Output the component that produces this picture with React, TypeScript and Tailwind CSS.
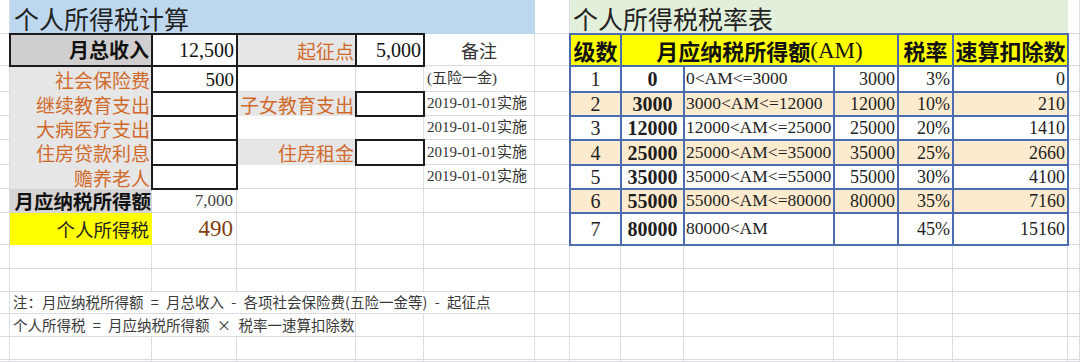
import React from 'react';

const GRID = 'border-r border-b border-[#d9dce5]';
const SERIF = "font-['Liberation_Serif','Noto_Sans_CJK_SC',serif]";
const SANS = "font-['Noto_Sans_CJK_SC','Noto_Sans',sans-serif]";
const BLK = 'relative outline-2 outline-[#1c1c1c] outline-offset-[-1px]';
const BLU = 'relative outline-2 outline-[#4c6cb0] outline-offset-[-1px]';

function E({ n = 1 }: { n?: number }) {
  return (
    <>
      {Array.from({ length: n }).map((_, i) => (
        <div key={i} className={GRID} />
      ))}
    </>
  );
}

type Rate = { n: string; a: string; r: string; u: string; p: string; q: string; alt: boolean };

const rates: Rate[] = [
  { n: '1', a: '0', r: '0<AM<=3000', u: '3000', p: '3%', q: '0', alt: false },
  { n: '2', a: '3000', r: '3000<AM<=12000', u: '12000', p: '10%', q: '210', alt: true },
  { n: '3', a: '12000', r: '12000<AM<=25000', u: '25000', p: '20%', q: '1410', alt: false },
  { n: '4', a: '25000', r: '25000<AM<=35000', u: '35000', p: '25%', q: '2660', alt: true },
  { n: '5', a: '35000', r: '35000<AM<=55000', u: '55000', p: '30%', q: '4100', alt: false },
  { n: '6', a: '55000', r: '55000<AM<=80000', u: '80000', p: '35%', q: '7160', alt: true },
  { n: '7', a: '80000', r: '80000<AM', u: '', p: '45%', q: '15160', alt: false },
];

function RateCells({ r }: { r: Rate }) {
  const bg = r.alt ? 'bg-[#fdebcf]' : 'bg-white';
  const base = `${BLU} ${bg} flex items-center ${SERIF} leading-none text-[#1e1e1e] overflow-visible whitespace-nowrap`;
  return (
    <>
      <div className={`${base} justify-center text-[20px] font-medium`}>{r.n}</div>
      <div className={`${base} justify-center text-[20px] font-bold`}>{r.a}</div>
      <div className={`${base} justify-start pl-[2px] text-[17.5px]`}>{r.r}</div>
      <div className={`${base} justify-end pr-[3px] text-[18px]`}>{r.u}</div>
      <div className={`${base} justify-end pr-[3px] text-[18px]`}>{r.p}</div>
      <div className={`${base} justify-end pr-[3px] text-[18px]`}>{r.q}</div>
    </>
  );
}

const orangeLabel = `flex items-center justify-end pr-[2px] ${SANS} text-[19px] leading-none text-[#d06a2b] whitespace-nowrap`;
const note2019 = `${GRID} flex items-center pl-[3px] ${SERIF} text-[15px] leading-none text-[#333] whitespace-nowrap`;
const noteText = `flex items-center pl-[3px] ${SANS} text-[14.5px] leading-none text-[#3a3a3a] whitespace-nowrap`;

export default function App() {
  return (
    <div className="w-[1080px] h-[362px] overflow-hidden bg-white">
      <div className="grid grid-cols-[10px_142px_85px_119px_68px_111px_35px_51px_63px_150px_64px_55px_115px_12px] grid-rows-[34px_32px_26px_24px_24px_25px_24px_24px_32px_24px_23px_22px_23px_23px_2px]">
        {/* Row 1: titles */}
        <E />
        <div className={`col-span-5 bg-[#bdd7ee] flex items-center pl-[4px] pt-[2px] ${SANS} text-[25px] leading-none text-[#222] whitespace-nowrap`}>
          个人所得税计算
        </div>
        <E />
        <div className={`col-span-6 bg-[#e2efda] flex items-center pl-[3px] pt-[2px] ${SANS} text-[25px] leading-none text-[#222] whitespace-nowrap`}>
          个人所得税税率表
        </div>
        <E />

        {/* Row 2 */}
        <E />
        <div className={`${BLK} bg-[#d0cece] flex items-center justify-end pr-[3px] ${SANS} text-[20px] font-bold leading-none text-[#111]`}>
          月总收入
        </div>
        <div className={`${BLK} bg-white flex items-center justify-end pr-[3px] ${SERIF} text-[20px] leading-none text-[#111]`}>
          12,500
        </div>
        <div className={`${BLK} bg-[#e7e6e6] ${orangeLabel}`}>起征点</div>
        <div className={`${BLK} bg-white flex items-center justify-end pr-[3px] ${SERIF} text-[20px] leading-none text-[#111]`}>
          5,000
        </div>
        <div className={`${GRID} flex items-center justify-center ${SANS} text-[18px] leading-none text-[#333]`}>备注</div>
        <E />
        <div className={`${BLU} bg-[#ffff00] flex items-center justify-center ${SANS} text-[22px] font-semibold leading-none text-[#111]`}>
          级数
        </div>
        <div className={`${BLU} col-span-3 bg-[#ffff00] flex items-center justify-center ${SANS} text-[22px] font-semibold leading-none text-[#111] whitespace-nowrap`}>
          月应纳税所得额<span className={`${SERIF} text-[23px] font-normal`}>(AM)</span>
        </div>
        <div className={`${BLU} bg-[#ffff00] flex items-center justify-center ${SANS} text-[22px] font-semibold leading-none text-[#111]`}>
          税率
        </div>
        <div className={`${BLU} bg-[#ffff00] flex items-center justify-center ${SANS} text-[22px] font-semibold leading-none text-[#111] whitespace-nowrap`}>
          速算扣除数
        </div>
        <E />

        {/* Row 3 */}
        <E />
        <div className={`bg-[#e7e6e6] ${orangeLabel}`}>社会保险费</div>
        <div className={`${BLK} bg-white flex items-center justify-end pr-[3px] ${SERIF} text-[19px] leading-none text-[#111]`}>
          500
        </div>
        <E n={2} />
        <div className={note2019}>(五险一金)</div>
        <E />
        <RateCells r={rates[0]} />
        <E />

        {/* Row 4 */}
        <E />
        <div className={`bg-[#e7e6e6] ${orangeLabel}`}>继续教育支出</div>
        <div className={`${BLK} bg-white`} />
        <div className={`bg-[#e7e6e6] ${orangeLabel}`}>子女教育支出</div>
        <div className={`${BLK} bg-white`} />
        <div className={note2019}>2019-01-01实施</div>
        <E />
        <RateCells r={rates[1]} />
        <E />

        {/* Row 5 */}
        <E />
        <div className={`bg-[#e7e6e6] ${orangeLabel}`}>大病医疗支出</div>
        <div className={`${BLK} bg-white`} />
        <E n={2} />
        <div className={note2019}>2019-01-01实施</div>
        <E />
        <RateCells r={rates[2]} />
        <E />

        {/* Row 6 */}
        <E />
        <div className={`bg-[#e7e6e6] ${orangeLabel}`}>住房贷款利息</div>
        <div className={`${BLK} bg-white`} />
        <div className={`bg-[#e7e6e6] ${orangeLabel}`}>住房租金</div>
        <div className={`${BLK} bg-white`} />
        <div className={note2019}>2019-01-01实施</div>
        <E />
        <RateCells r={rates[3]} />
        <E />

        {/* Row 7 */}
        <E />
        <div className={`bg-[#e7e6e6] ${orangeLabel}`}>赡养老人</div>
        <div className={`${BLK} bg-white`} />
        <E n={2} />
        <div className={note2019}>2019-01-01实施</div>
        <E />
        <RateCells r={rates[4]} />
        <E />

        {/* Row 8 */}
        <E />
        <div className={`bg-[#d6d4d4] flex items-center justify-end pr-[1px] ${SANS} text-[19.5px] font-bold leading-none text-[#111] whitespace-nowrap`}>
          月应纳税所得额
        </div>
        <div className={`${GRID} flex items-center justify-end pr-[3px] ${SERIF} text-[17px] leading-none text-[#444]`}>
          7,000
        </div>
        <E n={3} />
        <E />
        <RateCells r={rates[5]} />
        <E />

        {/* Row 9 */}
        <E />
        <div className={`bg-[#ffff00] flex items-center justify-end pr-[3px] ${SANS} text-[18.5px] leading-none text-[#222]`}>
          个人所得税
        </div>
        <div className={`${GRID} flex items-center justify-end pr-[3px] ${SERIF} text-[23px] leading-none text-[#7f3f10]`}>
          490
        </div>
        <E n={3} />
        <E />
        <RateCells r={rates[6]} />
        <E />

        {/* Rows 10-11 */}
        <E n={14} />
        <E n={14} />

        {/* Row 12: note 1 */}
        <E />
        <div className={`col-span-5 border-r border-b border-[#d9dce5] ${noteText}`}>
          注：月应纳税所得额{'\u2002'}={'\u2002'}月总收入{'\u2002'}-{'\u2002'}各项社会保险费(五险一金等){'\u2002'}-{'\u2002'}起征点
        </div>
        <E n={8} />

        {/* Row 13: note 2 */}
        <E />
        <div className={`col-span-3 border-r border-b border-[#d9dce5] ${noteText}`}>
          个人所得税{'\u2002'}={'\u2002'}月应纳税所得额{'\u2002'}×{'\u2002'}税率一速算扣除数
        </div>
        <E n={10} />

        {/* Rows 14-15 */}
        <E n={14} />
        <E n={14} />
      </div>
    </div>
  );
}
